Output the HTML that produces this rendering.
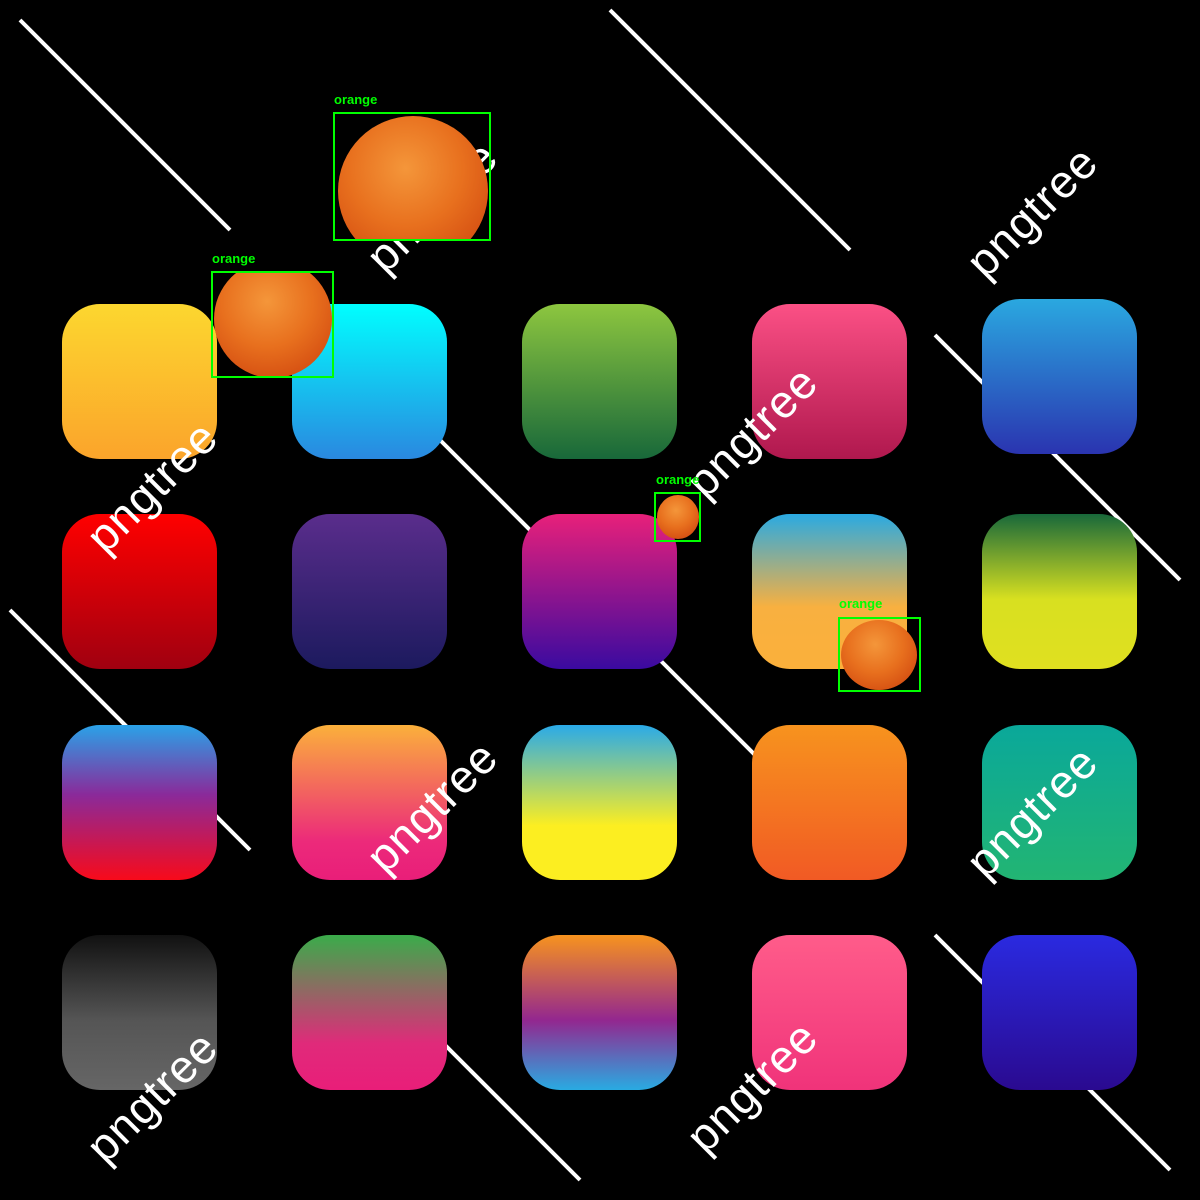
<!DOCTYPE html><html><head><style>
body{margin:0;width:1200px;height:1200px;background:#000;position:relative;overflow:hidden;font-family:"Liberation Sans",sans-serif}
.t{position:absolute;width:155px;height:155px;border-radius:38px}
.wm{position:absolute;color:#fff;font-size:46px;transform:rotate(-45deg);transform-origin:left top;letter-spacing:1px}
.box{position:absolute;border:2px solid #00ff00;box-sizing:border-box}
.lb{position:absolute;color:#00ff00;font-size:13px;font-weight:bold}
.or{position:absolute;border-radius:50%;background:radial-gradient(circle at 45% 35%,#f4963a,#e8701e 45%,#d54f12 80%,#b83a0a)}
</style></head><body>
<svg style="position:absolute;left:0;top:0" width="1200" height="1200">
<g stroke="#fff" stroke-width="4">
<line x1="20" y1="20" x2="230" y2="230"/><line x1="610" y1="10" x2="850" y2="250"/>
<line x1="935" y1="335" x2="1180" y2="580"/><line x1="440" y1="440" x2="640" y2="640"/>
<line x1="10" y1="610" x2="250" y2="850"/><line x1="660" y1="660" x2="780" y2="780"/>
<line x1="935" y1="935" x2="1170" y2="1170"/><line x1="440" y1="1040" x2="580" y2="1180"/>
</g></svg>
<div class="t" style="left:62px;top:304px;background:linear-gradient(#fcd72f,#fba42b)"></div>
<div class="t" style="left:292px;top:304px;background:linear-gradient(#00ffff,#2a88e0)"></div>
<div class="t" style="left:522px;top:304px;background:linear-gradient(#8dc63f,#18683a)"></div>
<div class="t" style="left:752px;top:304px;background:linear-gradient(#fb5085,#b0184e)"></div>
<div class="t" style="left:982px;top:299px;background:linear-gradient(#2aa8e0,#2a34b0)"></div>
<div class="t" style="left:62px;top:514px;background:linear-gradient(#ff0000,#a00010)"></div>
<div class="t" style="left:292px;top:514px;background:linear-gradient(#5a2d8c,#1c1a5e)"></div>
<div class="t" style="left:522px;top:514px;background:linear-gradient(#e8207a,#3a0aa0)"></div>
<div class="t" style="left:752px;top:514px;background:linear-gradient(#2aaae2,#f8b040 60%,#fbb03b)"></div>
<div class="t" style="left:982px;top:514px;background:linear-gradient(#18683a,#d8e020 55%,#e0e020)"></div>
<div class="t" style="left:62px;top:725px;background:linear-gradient(#2aa2e8,#8a2a9a 45%,#f80a1a)"></div>
<div class="t" style="left:292px;top:725px;background:linear-gradient(#fbb03b,#ec2a7a 75%,#e91e79)"></div>
<div class="t" style="left:522px;top:725px;background:linear-gradient(#2aaae8,#fcee21 65%,#fcee21)"></div>
<div class="t" style="left:752px;top:725px;background:linear-gradient(#f7931e,#f15a24)"></div>
<div class="t" style="left:982px;top:725px;background:linear-gradient(#0aa89a,#22b573)"></div>
<div class="t" style="left:62px;top:935px;background:linear-gradient(#111,#555 55%,#666)"></div>
<div class="t" style="left:292px;top:935px;background:linear-gradient(#3aac4a,#e02a7a 70%,#e91e79)"></div>
<div class="t" style="left:522px;top:935px;background:linear-gradient(#f7931e,#93278f 55%,#29abe2)"></div>
<div class="t" style="left:752px;top:935px;background:linear-gradient(#ff5c8a,#f0337a)"></div>
<div class="t" style="left:982px;top:935px;background:linear-gradient(#2a2ae0,#2a0a90)"></div>
<div class="wm" style="left:75px;top:525px">pngtree</div>
<div class="wm" style="left:355px;top:845px">pngtree</div>
<div class="wm" style="left:675px;top:470px">pngtree</div>
<div class="wm" style="left:955px;top:250px">pngtree</div>
<div class="wm" style="left:955px;top:850px">pngtree</div>
<div class="wm" style="left:75px;top:1135px">pngtree</div>
<div class="wm" style="left:675px;top:1125px">pngtree</div>
<div class="wm" style="left:355px;top:245px">pngtree</div>
<div class="or" style="left:338px;top:116px;width:150px;height:150px;clip-path:inset(0 0 26px 0)"></div>
<div class="box" style="left:333px;top:112px;width:158px;height:129px"></div>
<div class="lb" style="left:334px;top:92px">orange</div>
<div class="or" style="left:214px;top:260px;width:118px;height:118px;clip-path:inset(12px 0 2px 0)"></div>
<div class="box" style="left:211px;top:271px;width:123px;height:107px"></div>
<div class="lb" style="left:212px;top:251px">orange</div>
<div class="or" style="left:657px;top:495px;width:42px;height:44px"></div>
<div class="box" style="left:654px;top:492px;width:47px;height:50px"></div>
<div class="lb" style="left:656px;top:472px">orange</div>
<div class="or" style="left:841px;top:620px;width:76px;height:70px"></div>
<div class="box" style="left:838px;top:617px;width:83px;height:75px"></div>
<div class="lb" style="left:839px;top:596px">orange</div>
</body></html>
